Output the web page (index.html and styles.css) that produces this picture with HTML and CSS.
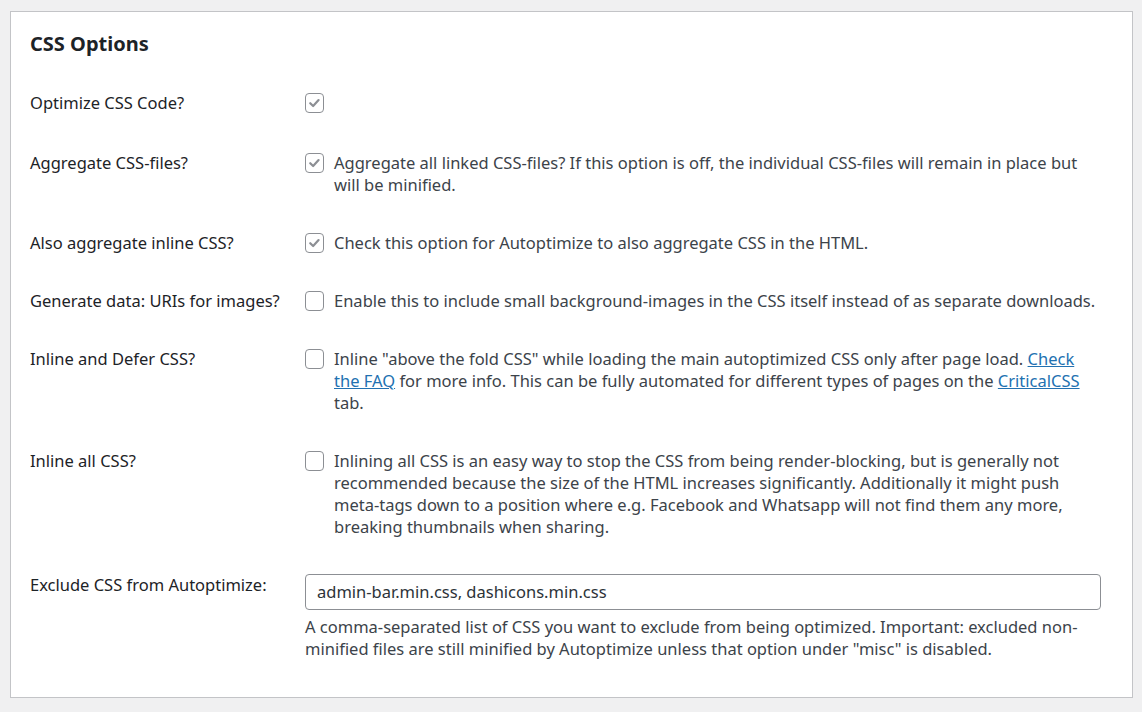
FILE: index.html
```html
<!DOCTYPE html>
<html>
<head>
<meta charset="utf-8">
<link rel="stylesheet" href="styles.css">
</head>
<body>
<div class="card">
  <h2 class="title">CSS Options</h2>
  <div class="row row-first">
    <div class="label">Optimize CSS Code?</div>
    <div class="field">
      <span class="cb checked"><svg viewBox="0 0 20 20"><path d="M5 10.2 L8.4 13.6 L14.8 6.6"/></svg></span>
    </div>
  </div>
  <div class="row">
    <div class="label">Aggregate CSS-files?</div>
    <div class="field">
      <span class="cb checked"><svg viewBox="0 0 20 20"><path d="M5 10.2 L8.4 13.6 L14.8 6.6"/></svg></span>
      <span class="text">Aggregate all linked CSS-files? If this option is off, the individual CSS-files will remain in place but will be minified.</span>
    </div>
  </div>
  <div class="row">
    <div class="label">Also aggregate inline CSS?</div>
    <div class="field">
      <span class="cb checked"><svg viewBox="0 0 20 20"><path d="M5 10.2 L8.4 13.6 L14.8 6.6"/></svg></span>
      <span class="text">Check this option for Autoptimize to also aggregate CSS in the HTML.</span>
    </div>
  </div>
  <div class="row">
    <div class="label">Generate data: URIs for images?</div>
    <div class="field">
      <span class="cb"></span>
      <span class="text">Enable this to include small background-images in the CSS itself instead of as separate downloads.</span>
    </div>
  </div>
  <div class="row">
    <div class="label">Inline and Defer CSS?</div>
    <div class="field">
      <span class="cb"></span>
      <span class="text">Inline "above the fold CSS" while loading the main autoptimized CSS only after page load. <a href="#">Check the FAQ</a> for more info. This can be fully automated for different types of pages on the <a href="#">CriticalCSS</a> tab.</span>
    </div>
  </div>
  <div class="row">
    <div class="label">Inline all CSS?</div>
    <div class="field">
      <span class="cb"></span>
      <span class="text">Inlining all CSS is an easy way to stop the CSS from being render-blocking, but is generally not recommended because the size of the HTML increases significantly. Additionally it might push meta-tags down to a position where e.g. Facebook and Whatsapp will not find them any more, breaking thumbnails when sharing.</span>
    </div>
  </div>
  <div class="row">
    <div class="label">Exclude CSS from Autoptimize:</div>
    <div class="field-col">
      <div class="input">admin-bar.min.css, dashicons.min.css</div>
      <div class="desc">A comma-separated list of CSS you want to exclude from being optimized. Important: excluded non-minified files are still minified by Autoptimize unless that option under "misc" is disabled.</div>
    </div>
  </div>
</div>
</body>
</html>
```

FILE: styles.css
```css
html, body {
  background: #f0f0f1;
}
body {
  margin: 11px 9px 0 10px;
  font-family: "Noto Sans", "Open Sans", sans-serif;
  font-size: 16.5px;
  line-height: 22px;
  color: #1d2327;
}
.card {
  background: #fff;
  border: 1px solid #c3c4c7;
  padding: 19px 19px 19px 19px;
}
.title {
  margin: 0 0 17px 0;
  font-size: 20px;
  line-height: 26px;
  font-weight: 700;
  color: #1d2327;
}
.row {
  display: grid;
  grid-template-columns: 275px 1fr;
  padding: 18px 0;
}
.row-first {
  padding-bottom: 20px;
}
.label {
  color: #1d2327;
}
.field {
  display: flex;
  align-items: flex-start;
  gap: 10px;
  padding-right: 12px;
}
.field-col {
  display: flex;
  flex-direction: column;
  padding-right: 12px;
}
.cb {
  flex: 0 0 auto;
  box-sizing: border-box;
  width: 19px;
  height: 20px;
  margin-top: 1px;
  border: 1px solid #8c8f94;
  border-radius: 4px;
  background: #fff;
  display: flex;
  align-items: center;
  justify-content: center;
}
.cb svg {
  width: 18px;
  height: 18px;
}
.cb svg path {
  fill: none;
  stroke: #8c8f94;
  stroke-width: 2.6;
  stroke-linecap: round;
  stroke-linejoin: round;
}
.text {
  color: #3c434a;
}
a {
  color: #2271b1;
  text-decoration: underline;
}
.input {
  box-sizing: border-box;
  height: 36px;
  border: 1px solid #8c8f94;
  border-radius: 4px;
  padding: 0 11px;
  line-height: 34px;
  color: #2c3338;
}
.desc {
  margin-top: 6px;
  color: #3c434a;
}
```
